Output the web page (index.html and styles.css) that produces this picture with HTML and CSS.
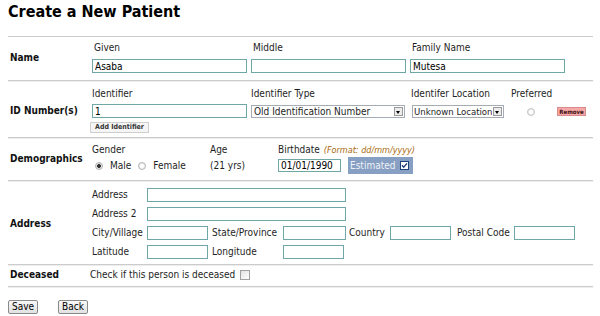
FILE: index.html
```html
<!DOCTYPE html>
<html lang="en">
<head>
    <meta charset="UTF-8">
    <title>Create a New Patient</title>
    <link rel="stylesheet" href="styles.css">
</head>
<body>
    <h1>Create a New Patient</h1>

    <div class="patient-form">
        <!-- Name -->
        <div class="row row-name">
            <div class="row-label">Name</div>
            <div class="name-fields">
                <span class="field-label indent">Given</span>
                <span class="field-label indent">Middle</span>
                <span class="field-label indent">Family Name</span>
                <input class="text wide" type="text" value="Asaba">
                <input class="text wide" type="text" value="">
                <input class="text wide" type="text" value="Mutesa">
            </div>
        </div>

        <!-- Identifiers -->
        <div class="row row-id">
            <div class="row-label">ID Number(s)</div>
            <div class="id-fields">
                <span class="field-label">Identifier</span>
                <span class="field-label">Identifier Type</span>
                <span class="field-label">Identifer Location</span>
                <span class="field-label">Preferred</span>
                <span></span>

                <input class="text wide" type="text" value="1">
                <div class="select type-select">
                    <span class="select-value">Old Identification Number</span>
                    <span class="select-arrow"></span>
                </div>
                <div class="select location-select">
                    <span class="select-value">Unknown Location</span>
                    <span class="select-arrow"></span>
                </div>
                <span class="radio preferred-radio"></span>
                <button class="remove-btn" type="button">Remove</button>

                <button class="add-btn" type="button">Add Identifier</button>
            </div>
        </div>

        <!-- Demographics -->
        <div class="row row-demo">
            <div class="row-label">Demographics</div>
            <div class="demo-fields">
                <span class="field-label">Gender</span>
                <span class="field-label">Age</span>
                <span class="field-label">Birthdate <em class="format">(Format: dd/mm/yyyy)</em></span>

                <div class="gender">
                    <span class="radio checked"></span><span class="radio-text">Male</span>
                    <span class="radio"></span><span class="radio-text">Female</span>
                </div>
                <div class="age">(21 yrs)</div>
                <div class="birthdate">
                    <input class="text birth-input" type="text" value="01/01/1990">
                    <div class="estimated">
                        Estimated
                        <svg class="check" width="9" height="9" viewBox="0 0 9 9">
                            <rect x="0.5" y="0.5" width="8" height="8" fill="#fff" stroke="#1d3f7a"/>
                            <path d="M2 4.3 L3.7 6.2 L7 2.4" fill="none" stroke="#1d3f7a" stroke-width="1.4"/>
                        </svg>
                    </div>
                </div>
            </div>
        </div>

        <!-- Address -->
        <div class="row row-address">
            <div class="row-label">Address</div>
            <div class="address-fields">
                <span class="field-label">Address</span>
                <input class="text addr-line" type="text">

                <span class="field-label">Address 2</span>
                <input class="text addr-line" type="text">

                <span class="field-label">City/Village</span>
                <input class="text short" type="text">
                <span class="field-label">State/Province</span>
                <input class="text short" type="text">
                <span class="field-label">Country</span>
                <input class="text short" type="text">
                <span class="field-label">Postal Code</span>
                <input class="text short" type="text">

                <span class="field-label">Latitude</span>
                <input class="text short" type="text">
                <span class="field-label">Longitude</span>
                <input class="text short" type="text">
            </div>
        </div>

        <!-- Deceased -->
        <div class="row row-small">
            <div class="row-label">Deceased</div>
            <div class="deceased">
                Check if this person is deceased
                <span class="checkbox"></span>
            </div>
        </div>
    </div>

    <div class="actions">
        <button class="btn" type="button">Save</button>
        <button class="btn" type="button">Back</button>
    </div>
</body>
</html>
```

FILE: styles.css
```css
* {
    box-sizing: border-box;
}
body {
    margin: 0;
    padding: 2px 7px 0 8px;
    font-family: "DejaVu Sans Condensed", "DejaVu Sans", sans-serif;
    font-stretch: condensed;
    font-size: 10px;
    line-height: 12px;
    color: #1e1e1e;
    background: #fff;
}
h1 {
    margin: 0 0 14px;
    font-size: 16px;
    line-height: 20px;
    font-weight: bold;
    color: #000;
}
input, button {
    font-family: "DejaVu Sans Condensed", "DejaVu Sans", sans-serif;
    font-stretch: condensed;
    margin: 0;
}
.patient-form {
    border-top: 1px solid #cccccc;
}
.row {
    display: flex;
    align-items: center;
    border-bottom: 1px solid #cccccc;
    box-shadow: 0 1px 0 #ededed;
}
.row-label {
    width: 84px;
    padding-left: 2px;
    font-weight: bold;
    color: #111;
    flex-shrink: 0;
}
.field-label {
    white-space: nowrap;
}
.indent {
    padding-left: 2px;
}
.text {
    height: 14px;
    border: 1px solid #6fa7a7;
    padding: 0 2px;
    font-size: 10px;
    color: #000;
    background: #fff;
    outline: none;
}
.wide {
    width: 155px;
}

/* name */
.row-name {
    padding: 5px 0 7px;
}
.name-fields {
    display: grid;
    grid-template-columns: 159px 159px 159px;
    row-gap: 5px;
}

/* identifiers */
.row-id {
    padding: 7px 0 4px;
}
.id-fields {
    display: grid;
    grid-template-columns: 159px 160px 100px 46px auto;
    grid-template-rows: 12px 14px 11px;
    row-gap: 4px;
    align-items: center;
}
.id-fields .add-btn {
    grid-column: 1;
    margin-left: -2px;
}
.select {
    display: flex;
    height: 13px;
    border: 1px solid #a5acb5;
    background: #fff;
    font-size: 10px;
    line-height: 11px;
}
.type-select {
    width: 154px;
}
.location-select {
    width: 92px;
    margin-left: 1px;
    font-size: 9.5px;
}
.select-value {
    flex: 1;
    padding-left: 2px;
    overflow: hidden;
    white-space: nowrap;
}
.location-select .select-value {
    padding-left: 1px;
}
.select-arrow {
    width: 9px;
    margin: 1px;
    border: 1px solid #9a9a9a;
    background: #ececec;
    position: relative;
    flex-shrink: 0;
}
.select-arrow::after {
    content: "";
    position: absolute;
    left: 1px;
    top: 3px;
    border-left: 2.5px solid transparent;
    border-right: 2.5px solid transparent;
    border-top: 3px solid #000;
}
.radio {
    display: inline-block;
    width: 8px;
    height: 8px;
    border-radius: 50%;
    border: 1px solid #b4b4b4;
    background: radial-gradient(circle, #ffffff 30%, #dcdcdc 100%);
    vertical-align: middle;
}
.radio.checked {
    background: radial-gradient(circle, #333 0, #333 1.6px, #e8e8e8 2.2px, #cfcfcf 100%);
}
.preferred-radio {
    margin-left: 16px;
    margin-top: 2px;
    border-color: #c4c4c4;
}
.remove-btn {
    width: 29px;
    height: 9px;
    padding: 0;
    border: 1px solid #d88a8a;
    background: #f7a8a8;
    color: #3a1010;
    font-size: 6px;
    line-height: 7px;
    font-weight: bold;
    margin-top: 1px;
}
.add-btn {
    width: 59px;
    height: 11px;
    padding: 0;
    border: 1px solid #cfcfcf;
    background: #f5f5f5;
    color: #333;
    font-size: 7px;
    line-height: 9px;
    font-weight: bold;
}

/* demographics */
.row-demo {
    padding: 6px 0 6px;
}
.demo-fields {
    display: grid;
    grid-template-columns: 118px 68px auto;
    grid-template-rows: 12px 17px;
    row-gap: 1px;
    align-items: center;
}
.format {
    font-size: 9px;
    color: #a8690c;
    padding-left: 1px;
}
.gender {
    display: flex;
    align-items: center;
    padding-left: 3px;
}
.radio-text {
    margin: 0 7px 0 7px;
}
.birthdate {
    display: flex;
    align-items: center;
}
.birth-input {
    width: 63px;
    height: 13px;
}
.estimated {
    display: flex;
    align-items: center;
    justify-content: space-between;
    width: 65px;
    height: 17px;
    margin-left: 7px;
    padding: 0 4px 0 2px;
    background: #869fc2;
    color: #eef2f8;
}
.check {
    display: block;
}

/* address */
.row-address {
    padding: 7px 0 5px;
}
.address-fields {
    display: grid;
    grid-template-columns: 55px 65px 71px 66px 41px 67px 57px 63px;
    grid-auto-rows: 14px;
    row-gap: 5px;
    align-items: center;
}
.addr-line {
    grid-column: 2 / 9;
    width: 199px;
}
.address-fields .field-label:nth-of-type(1),
.address-fields .field-label:nth-of-type(2),
.address-fields .field-label:nth-of-type(3),
.address-fields .field-label:nth-of-type(7) {
    grid-column: 1;
}
.short {
    width: 61px;
}
.short:nth-of-type(4) {
    width: 63px;
}

/* deceased */
.row-small {
    padding: 4px 0 5px;
}
.deceased {
    display: flex;
    align-items: center;
    margin-left: -2px;
}
.checkbox {
    display: inline-block;
    width: 10px;
    height: 10px;
    margin-left: 5px;
    border: 1px solid #a0a0a0;
    background: linear-gradient(135deg, #e2e2e2, #ffffff);
}

/* buttons */
.actions {
    display: flex;
    gap: 20px;
    margin-top: 13px;
}
.btn {
    height: 14px;
    padding: 0 3px;
    border: 1px solid #8a8a8a;
    border-radius: 2px;
    background: linear-gradient(#f8f8f8, #e2e2e2);
    color: #000;
    font-size: 10px;
    line-height: 12px;
}
```
